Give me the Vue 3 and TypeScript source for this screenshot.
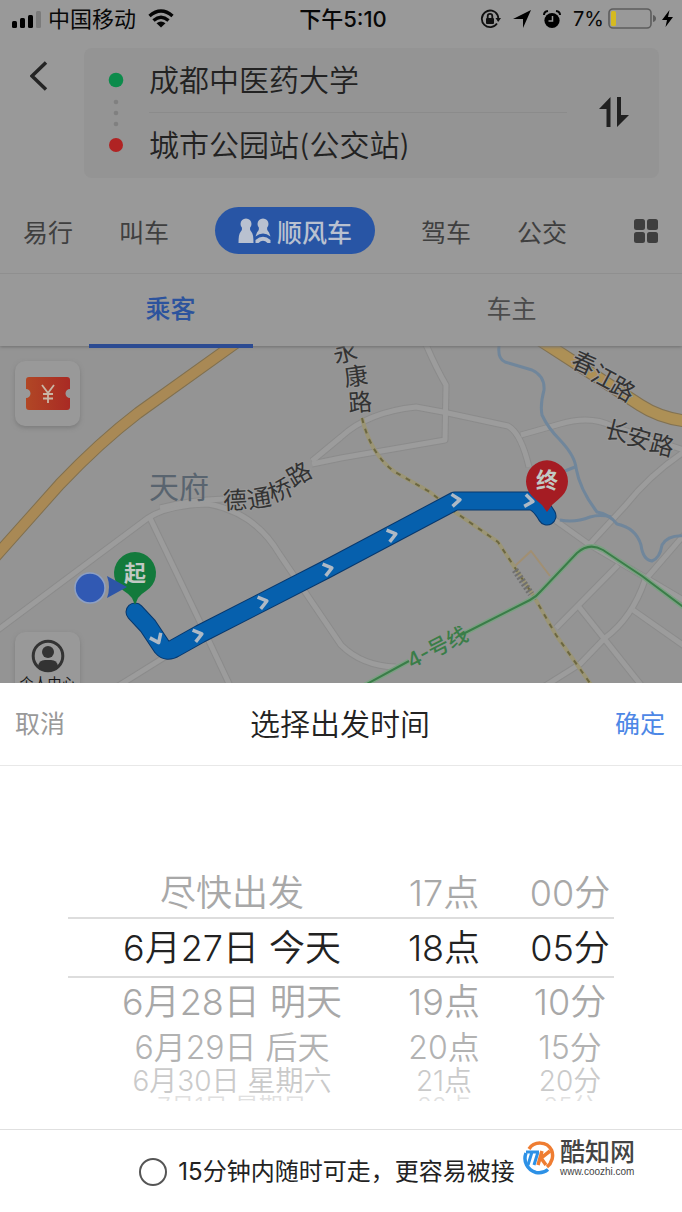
<script setup lang="ts">
import { ref } from 'vue'

interface Glyph { t: string; x: number; y: number; r: number }

const modesLeft: string[] = ['易行', '叫车']
const modesRight: string[] = ['驾车', '公交']

const days: string[] = ['尽快出发', '6月27日 今天', '6月28日 明天', '6月29日 后天', '6月30日 星期六', '7月1日 星期日']
const hours: string[] = ['17点', '18点', '19点', '20点', '21点', '22点']
const minutes: string[] = ['00分', '05分', '10分', '15分', '20分', '25分']
const columns = [
  { name: '日期', items: days },
  { name: '小时', items: hours },
  { name: '分钟', items: minutes },
]
const flexible = ref(false)

const streets: Glyph[] = [
  { t: '永', x: 345, y: 352, r: -14 }, { t: '康', x: 356, y: 376, r: -8 }, { t: '路', x: 360, y: 402, r: -4 },
  { t: '德', x: 235, y: 500, r: -3 }, { t: '通', x: 259, y: 498, r: -10 }, { t: '桥', x: 280, y: 490, r: -22 }, { t: '路', x: 299, y: 474, r: -30 },
  { t: '春', x: 584, y: 363, r: 24 }, { t: '江', x: 604, y: 377, r: 28 }, { t: '路', x: 623, y: 389, r: 30 },
  { t: '长', x: 617, y: 431, r: 14 }, { t: '安', x: 639, y: 438, r: 16 }, { t: '路', x: 662, y: 445, r: 14 },
]

const roads: string[] = [
  'M-5 632L148 518Q168 505 208 504Q255 512 280 555L341 645Q362 666 396 667',
  'M150 518L200 622L232 690',
  'M115 688L168 655',
  'M160 508Q190 500 224 499',
  'M312 461L341 437Q368 412 416 407L443 412L508 426Q521 433 529 467',
  'M312 464L341 458L445 440L446 385Q436 368 424 340',
  'M521 435L560 424Q590 415 612 426L690 452',
  'M690 448Q652 472 625 506L588 546',
  'M552 518L587 543L690 604',
  'M690 528L645 580Q632 618 605 638L580 664L545 686',
  'M556 628L618 565',
  'M579 607L645 690',
  'M633 610L690 650',
]

const chevrons: Glyph[] = [
  { t: 'a', x: 157, y: 639, r: 65 }, { t: 'b', x: 198, y: 635, r: -15 }, { t: 'c', x: 263, y: 602, r: -15 },
  { t: 'd', x: 328, y: 569, r: -15 }, { t: 'e', x: 392, y: 535, r: -15 }, { t: 'f', x: 456, y: 500, r: -5 }, { t: 'g', x: 529, y: 501, r: 8 },
]
</script>

<template>
  <main class="app">
    <header class="top">
      <div class="status">
        <div class="status-side">
          <svg width="30" height="18" viewBox="0 0 30 18"><rect x="0" y="11" width="5" height="7" rx="1.5" /><rect x="8" y="8" width="5" height="10" rx="1.5" /><rect x="16" y="5" width="5" height="13" rx="1.5" /><rect x="24" y="1" width="5" height="17" rx="1.5" fill="#7b7b7b" /></svg>
          <span class="carrier">中国移动</span>
          <svg class="wifi" width="26" height="20" viewBox="0 0 26 20" fill="none" stroke="#050505" stroke-width="3.4"><path d="M1.5 7Q13-3 24.500 7" /><path d="M5.500 11.500Q13 5 20.500 11.500" /><path d="M13 18.500L8.500 14.300Q13 10.800 17.500 14.300Z" fill="#050505" stroke="none" /></svg>
        </div>
        <time class="clock">下午5:10</time>
        <div class="status-side right">
          <svg width="21" height="20" viewBox="0 0 21 20" fill="none" stroke="#111" stroke-width="1.8"><path d="M17.500 6A8.300 8.300 0 1 0 17 14.500M17.500 6Q18.500 8 18.200 10.500" /><path d="M15.500 9H21L18.200 13Z" fill="#111" stroke="none" /><rect x="6" y="9" width="8" height="6" rx="1" fill="#111" stroke="none" /><path d="M7.700 9V7.200a2.300 2.300 0 0 1 4.600 0V9" /></svg>
          <svg width="18" height="18" viewBox="0 0 18 18"><path d="M18 0L10 18V9H0Z" /></svg>
          <svg width="18" height="19" viewBox="0 0 18 19"><circle cx="9" cy="10.500" r="7.600" /><path d="M1 5Q1 1.500 5 1M17 5Q17 1.500 13 1" fill="none" stroke="#050505" stroke-width="2" /><path d="M9.500 6V11H5.500" fill="none" stroke="#999" stroke-width="1.500" /></svg>
          <span class="percent">7%</span>
          <svg width="66" height="22" viewBox="0 0 66 22"><rect x="1" y="1" width="42" height="19" rx="4" fill="none" stroke="#5d5d5d" stroke-width="1.600" /><rect x="3" y="3" width="5" height="15" rx="1.500" fill="#d5ba21" /><path d="M45 7Q48 8 48 10.500Q48 13 45 14Z" fill="#5d5d5d" /><path d="M61.500 2L54 12H59L57.500 19L65 9H60Z" /></svg>
        </div>
      </div>

      <div class="trip">
        <button class="plain back" aria-label="返回"><svg width="18" height="30" viewBox="0 0 18 30" fill="none" stroke="#242424" stroke-width="3.500"><path d="M16 1.500L2 15L16 28.500" /></svg></button>
        <div class="card">
          <svg class="stops" width="16" height="80" viewBox="0 0 16 80"><circle cx="8" cy="8" r="7.300" fill="#0c8b4b" /><g fill="#808080"><circle cx="8" cy="30" r="2.300" /><circle cx="8" cy="41" r="2.300" /><circle cx="8" cy="52" r="2.300" /></g><circle cx="8" cy="73" r="7" fill="#b02323" /></svg>
          <div class="places">
            <button class="plain place">成都中医药大学</button>
            <button class="plain place">城市公园站(公交站)</button>
          </div>
          <button class="plain swap" aria-label="交换起点和终点"><svg width="30" height="32" viewBox="0 0 30 32" fill="#202020"><path d="M11.500 1V31H7.500V13H0Z" /><path d="M18 31V1H22V19H30Z" /></svg></button>
        </div>
      </div>

      <nav class="modes" aria-label="出行方式">
        <a v-for="m in modesLeft" :key="m" href="#">{{ m }}</a>
        <a class="pill" href="#">
          <svg width="33" height="26" viewBox="0 0 33 26" fill="#b9c1d0"><circle cx="8" cy="6" r="5.500" /><path d="M4 9H12Q11.500 12 13.500 14Q15.500 16 15.500 25H.5Q.5 16 2.500 14Q4.500 12 4 9Z" /><circle cx="25" cy="6" r="5.500" /><path d="M21 9H29Q28.500 12 31 14.500L32.500 18.500Q25 12.500 17.500 18.500L19 14.500Q21.500 12 21 9Z" /><path d="M17.500 22Q25 15.500 32.500 22V25H29.500Q25 20.500 20.500 25H17.500Z" /></svg>
          <span>顺风车</span>
        </a>
        <a v-for="m in modesRight" :key="m" href="#">{{ m }}</a>
        <button class="plain more" aria-label="更多"><svg width="24" height="24" viewBox="0 0 24 24" fill="#3e3e3e"><rect width="11" height="11" rx="2.500" /><rect x="13" width="11" height="11" rx="2.500" /><rect y="13" width="11" height="11" rx="2.500" /><rect x="13" y="13" width="11" height="11" rx="2.500" /></svg></button>
      </nav>

      <nav class="roles" aria-label="身份">
        <a class="active" href="#">乘客</a>
        <a href="#">车主</a>
      </nav>
    </header>

    <section class="map" aria-label="路线地图">
      <svg class="canvas" viewBox="0 346 682 337" preserveAspectRatio="xMidYMid slice">
        <rect x="-400" y="0" width="1500" height="1200" fill="#949494" />
        <g fill="none" stroke-linejoin="round">
          <path v-for="d in roads" :key="d" :d="d" stroke="#8b8b8b" stroke-width="7" />
          <path v-for="d in roads" :key="d" :d="d" stroke="#9c9c9c" stroke-width="5" />
          <g stroke="#70869b" stroke-width="3">
            <path d="M500 340Q496 358 505 362L532 370Q545 376 544 390Q540 405 542 415Q548 428 560 440Q575 456 576 468Q580 490 597 512Q609 514 617 524Q636 528 641 545Q643 560 652 561Q660 558 662 545Q668 534 686 536" />
            <path d="M560 520Q575 523 590 517Q600 514 611 517M565 471L575 467" />
          </g>
          <path d="M240 340L138 413Q100 442 60 484L-5 557" stroke="#80704f" stroke-width="12" />
          <path d="M240 340L138 413Q100 442 60 484L-5 557" stroke="#a98955" stroke-width="10" />
          <path d="M540 340L574 362L640 405Q660 418 686 421" stroke="#827252" stroke-width="13" />
          <path d="M540 340L574 362L640 405Q660 418 686 421" stroke="#ad9056" stroke-width="11" />
          <path d="M515 566L531 551L550 576" stroke="#a18f72" stroke-width="2" />
          <path d="M362 418Q371 455 395 472L430 492L455 512L498 542Q515 568 533 595L556 635L592 686" stroke="#9b9575" stroke-width="4" />
          <path d="M362 418Q371 455 395 472L430 492L455 512L498 542Q515 568 533 595L556 635L592 686" stroke="#6c6740" stroke-width="2" stroke-dasharray="5 6" />
          <path d="M515 570L531 594" stroke="#707070" stroke-width="7" stroke-dasharray="2 2" />
          <path d="M365 685L409 661M461 635L530 600Q536 597 541 591L577 553Q589 542 603 550L642 576L686 609" stroke="#7ba082" stroke-width="5" />
          <path d="M365 685L409 661M461 635L530 600Q536 597 541 591L577 553Q589 542 603 550L642 576L686 609" stroke="#3a7d48" stroke-width="2" />
          <path d="M135 612L148 626L162 647Q167 653 175 648L200 634L325 570L455 501H530Q538 501 547 516" stroke="#08386d" stroke-width="19" stroke-linecap="round" />
          <path d="M135 612L148 626L162 647Q167 653 175 648L200 634L325 570L455 501H530Q538 501 547 516" stroke="#0660ad" stroke-width="17" stroke-linecap="round" />
          <path v-for="c in chevrons" :key="c.t" d="M-4 -6L4 0L-4 6" :transform="`translate(${c.x} ${c.y}) rotate(${c.r})`" stroke="#aeb9c5" stroke-width="3.500" />
        </g>
        <g class="streets">
          <text v-for="(g, i) in streets" :key="i" :transform="`translate(${g.x} ${g.y}) rotate(${g.r})`" dy="9">{{ g.t }}</text>
        </g>
        <text class="district" x="149" y="498">天府</text>
        <text class="metro" transform="translate(437 647) rotate(-27)" dy="8">4-号线</text>
        <circle cx="90" cy="588" r="15" fill="#3159b3" stroke="#8da0c4" stroke-width="1.500" />
        <path d="M135 605L132 598Q129 594 124 591A21 21 0 1 1 146 591Q141 594 138 598Z" fill="#137a3c" />
        <path d="M107 576L127 587L107 598Q111 587 107 576Z" fill="#2d55a7" />
        <text class="pin" x="135" y="581">起</text>
        <path d="M547 512L542 505Q536 500 532 496A21 21 0 1 1 562 496Q558 500 552 505Z" fill="#a51c23" />
        <text class="pin" x="547" y="488">终</text>
      </svg>
      <button class="tile coupon" aria-label="优惠券"><svg width="44" height="33" viewBox="0 0 44 33"><defs><linearGradient id="ticket"><stop offset="0" stop-color="#b14725" /><stop offset="1" stop-color="#a92a24" /></linearGradient></defs><path d="M3 0H41Q44 0 44 3V12A4.500 4.500 0 0 0 44 21V30Q44 33 41 33H3Q0 33 0 30V21A4.500 4.500 0 0 0 0 12V3Q0 0 3 0Z" fill="url(#ticket)" /><path d="M16 8L22 16L28 8M22 16V26M17 17H27M17 21.500H27" fill="none" stroke="#c9b7a6" stroke-width="1.800" /></svg></button>
      <button class="tile profile"><svg width="34" height="34" viewBox="0 0 34 34"><circle cx="17" cy="17" r="14.800" fill="none" stroke="#333" stroke-width="3" /><circle cx="17" cy="13" r="6" fill="#333" /><path d="M7 27Q8 21 14 21H20Q26 21 27 27Q23 32 17 32Q11 32 7 27Z" fill="#333" /></svg><span>个人中心</span></button>
    </section>

    <section class="sheet" aria-labelledby="sheet-title">
      <div class="sheet-head">
        <button class="plain cancel">取消</button>
        <h1 id="sheet-title">选择出发时间</h1>
        <button class="plain confirm">确定</button>
      </div>
      <div class="picker">
        <div class="wheels">
          <ul v-for="c in columns" :key="c.name" :aria-label="c.name">
            <li v-for="(item, i) in c.items" :key="item" :class="`row row-${i}`"><button class="plain" :aria-pressed="i === 1">{{ item }}</button></li>
          </ul>
        </div>
      </div>
      <footer class="foot">
        <label class="flexible"><input v-model="flexible" type="checkbox" /><span>15分钟内随时可走，更容易被接单</span></label>
        <div class="brand">
          <svg width="32" height="34" viewBox="0 0 32 34" fill="none"><path d="M6 8C11 0 24 0 28.500 9C31 15 29 22 24 26" stroke="#ef7d32" stroke-width="3.500" /><path d="M3 12C0 20 4 29 13 31.500C18 32.500 22 31 25 28.500" stroke="#2d91e6" stroke-width="3.500" /><path d="M3 11H16M9 11L5 24M15 11L11 24" stroke="#2d91e6" stroke-width="3" /><path d="M19 10L15 24M27 10L18 17L23 24" stroke="#ef7d32" stroke-width="3.500" /></svg>
          <div class="brand-text"><strong>酷知网</strong><span>www.coozhi.com</span></div>
        </div>
      </footer>
    </section>
  </main>
</template>

<style>
body { margin: 0; }
</style>

<style scoped>
.app, .app * { box-sizing: border-box; }
.app {
  min-height: 100vh;
  display: flex;
  flex-direction: column;
  background: #fff;
  font-family: Inter, "Noto Sans CJK SC", sans-serif;
}
svg { display: block; flex: none; }
a { color: inherit; text-decoration: none; }
button { font-family: inherit; }
.plain { padding: 0; border: 0; background: none; color: inherit; font-size: inherit; font-weight: inherit; line-height: inherit; cursor: pointer; }
.top { background: #999; position: relative; z-index: 1; box-shadow: 0 1px 3px #6f6f6f; }

.status { height: 38px; padding: 0 8px 0 12px; display: grid; grid-template-columns: 1fr auto 1fr; align-items: center; color: #080808; font-size: 22px; line-height: 32px; }
.status-side { display: flex; align-items: center; white-space: nowrap; }
.carrier { margin-left: 6px; }
.wifi { margin-left: 12px; }
.clock { font-weight: 500; }
.right { justify-content: flex-end; gap: 12px; }
.percent { font-size: 20px; }
.right svg:last-child { margin-left: -8px; }

.trip { display: flex; padding: 10px 23px 0 30px; }
.back { width: 54px; height: 56px; display: flex; align-items: center; }
.card { flex: 1; height: 130px; padding: 0 30px 2px 24px; display: flex; align-items: center; border-radius: 8px; background: #949494; }
.places { flex: 1; margin: 0 32px 0 25px; color: #222; font-size: 30px; font-weight: 350; line-height: 64px; }
.place { display: block; width: 100%; text-align: left; white-space: nowrap; }
.place:first-child { border-bottom: 1px solid #8b8b8b; }

.modes { height: 96px; padding: 10px 24px 0 23px; display: flex; align-items: center; gap: 46px; color: #3f3f3f; font-size: 25px; font-weight: 400; white-space: nowrap; border-bottom: 1px solid #8f8f8f; }
.pill { width: 160px; height: 47px; display: flex; align-items: center; justify-content: center; gap: 6px; border-radius: 24px; background: #2855a5; color: #b9c1d0; font-weight: 500; }
.more { margin-left: auto; }
.roles { height: 72px; display: grid; grid-template-columns: 1fr 1fr; color: #4b4b4b; font-size: 25px; line-height: 70px; text-align: center; }
.roles a { display: block; width: 164px; margin: 0 auto; }
.roles .active { color: #2c539d; font-weight: 500; border-bottom: 4px solid #2c4b92; }

.map { flex: 1 0 337px; position: relative; overflow: hidden; background: #949494; }
.canvas { position: absolute; width: 100%; height: 100%; }
.streets text { font-size: 24px; text-anchor: middle; fill: #333; stroke: #999; stroke-width: 2px; paint-order: stroke; }
.district { font-size: 30px; fill: #59646f; }
.metro { font-size: 21px; text-anchor: middle; fill: #3a7d48; font-weight: 500; }
.pin { font-size: 22px; font-weight: 700; text-anchor: middle; fill: #c2c9c4; }
.tile { position: absolute; left: 15px; width: 65px; height: 65px; padding: 0; display: flex; flex-direction: column; align-items: center; border: 0; border-radius: 10px; background: #999; box-shadow: 0 2px 4px #7c7c7c; }
.coupon { top: 15px; justify-content: center; }
.profile { bottom: -14px; padding-top: 7px; color: #161616; font-size: 14px; line-height: 20px; white-space: nowrap; }

.sheet { flex: none; color: #222; background: #fff; }
.sheet-head { height: 83px; padding: 0 17px 0 15px; display: grid; grid-template-columns: 1fr auto 1fr; align-items: center; border-bottom: 1px solid #e8e8e8; font-size: 25px; line-height: 40px; }
.sheet-head h1 { margin: 0; font-size: 30px; font-weight: 350; }
.cancel { justify-self: start; color: #999; }
.confirm { justify-self: end; color: #4d87e6; }
.picker { height: 364px; padding: 101px 34px 0 68px; border-bottom: 1px solid #e0e0e0; }
.wheels { position: relative; height: 234px; display: grid; grid-template-columns: 328fr 96fr 156fr; overflow: hidden; }
.wheels::before { content: ""; position: absolute; top: 50px; left: 0; right: 34px; height: 57px; border-top: 2px solid #ddd; border-bottom: 2px solid #ddd; pointer-events: none; }
.wheels ul { margin: 0; padding: 0; list-style: none; }
.row { display: flex; align-items: center; justify-content: center; color: #a8a8a8; font-size: 36px; font-weight: 350; white-space: nowrap; }
.row-0 { height: 52px; line-height: 48px; }
.row-1 { height: 57px; line-height: 48px; color: #222; }
.row-2 { height: 51px; line-height: 46px; }
.row-3 { height: 41px; line-height: 38px; font-size: 32px; color: #b2b2b2; }
.row-4 { height: 27px; line-height: 27px; font-size: 28px; color: #cacaca; }
.row-5 { height: 24px; line-height: 24px; font-size: 24px; color: #e0e0e0; }

.foot { position: relative; height: 82px; padding-top: 2px; display: flex; align-items: center; justify-content: center; }
.flexible { display: flex; align-items: center; gap: 11px; padding-right: 4px; font-size: 24px; line-height: 36px; white-space: nowrap; }
.flexible input { appearance: none; width: 28px; height: 28px; margin: 0; border: 2px solid #555; border-radius: 50%; background: #fff; }
.flexible input:checked { background: #4d87e6; }
.brand { position: absolute; top: 1px; right: 20px; height: 54px; padding: 0 27px 0 8px; display: flex; align-items: center; gap: 5px; border-radius: 6px; background: #fff; color: #444; }
.brand-text { display: flex; flex-direction: column; }
.brand strong { font-size: 25px; font-weight: 500; line-height: 27px; }
.brand span { font-family: "Liberation Sans", sans-serif; font-size: 10px; line-height: 12px; }
</style>
